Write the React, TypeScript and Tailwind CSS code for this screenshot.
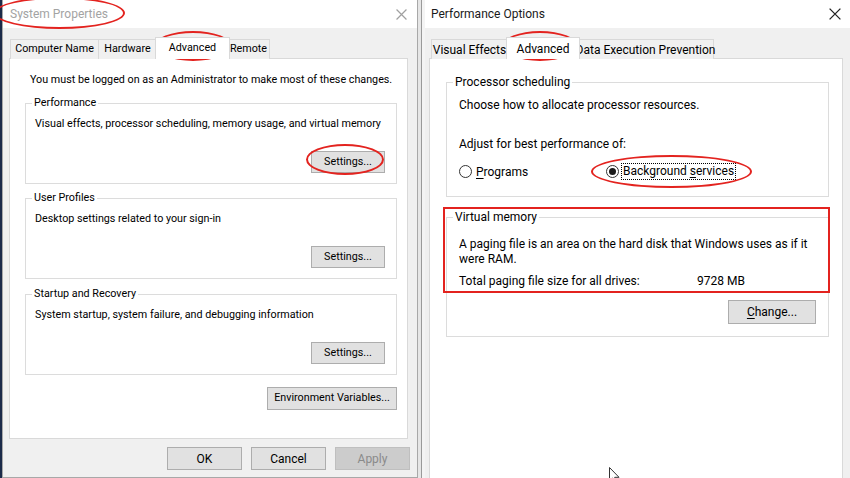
import React from "react";

function CloseX({ color, size }: { color: string; size: number }) {
  return (
    <svg width={size} height={size} viewBox="0 0 10 10" fill="none">
      <path d="M0.5 0.5 L9.5 9.5 M9.5 0.5 L0.5 9.5" stroke={color} strokeWidth="1.1" />
    </svg>
  );
}

function Btn({ children, className }: { children: React.ReactNode; className: string }) {
  return (
    <div className={`flex items-center justify-center whitespace-nowrap border border-[#adadad] bg-[#e1e1e1] text-black ${className}`}>
      {children}
    </div>
  );
}

function Radio({ checked }: { checked?: boolean }) {
  return (
    <span className="flex h-[13px] w-[13px] items-center justify-center rounded-full border border-[#333333] bg-white">
      {checked ? <span className="h-[7px] w-[7px] rounded-full bg-[#1a1a1a]" /> : null}
    </span>
  );
}

function Ellipse({ className }: { className: string }) {
  return <div className={`pointer-events-none absolute rounded-[50%] border-2 border-[#e3231f] ${className}`} />;
}

function LeftGroup({ title, desc, mt }: { title: string; desc: string; mt: string }) {
  return (
    <fieldset className={`ml-[15px] mr-[10px] min-w-0 border border-[#dcdcdc] ${mt}`}>
      <legend className="ml-[6px] px-[2px] leading-[14px]">{title}</legend>
      <div className="pb-[10px] pl-[9px] pr-[11px] pt-[6px]">
        <div className="leading-[16px]">{desc}</div>
        <div className="mt-[19px] flex justify-end">
          <Btn className="h-[22px] w-[74px]">Settings...</Btn>
        </div>
      </div>
    </fieldset>
  );
}

export default function App() {
  return (
    <div className="relative flex h-[478px] w-[850px] overflow-hidden whitespace-nowrap bg-[#f0f0f0] font-['Roboto',sans-serif] text-black">
      {/* desktop edge */}
      <div className="w-[2px] shrink-0 bg-[#1c2b4a]" />

      {/* LEFT: System Properties */}
      <div className="flex w-[416px] shrink-0 flex-col border-b border-l border-r border-[#a8a8a8]">
        <div className="flex h-[28px] items-center justify-between bg-white pl-[7px] pr-[10px]">
          <span className="text-[12px] text-[#a3a3a3]">System Properties</span>
          <CloseX color="#a0a0a0" size={11} />
        </div>
        <div className="flex flex-1 flex-col bg-[#f0f0f0] pl-[6px] pr-[9px] pt-[10px] text-[10.75px]">
          {/* tabs */}
          <div className="relative z-10 -mb-px flex h-[21px] items-end pl-[1px]">
            <div className="flex h-[20px] w-[89px] items-center justify-center border border-b-0 border-[#d9d9d9] bg-[#f0f0f0]">Computer Name</div>
            <div className="-ml-px flex h-[20px] w-[59px] items-center justify-center border border-b-0 border-[#d9d9d9] bg-[#f0f0f0]">Hardware</div>
            <div className="relative z-10 -mx-[2px] flex h-[22px] w-[75px] items-center justify-center border border-b-0 border-[#d9d9d9] bg-white">Advanced</div>
            <div className="flex h-[20px] w-[42px] items-center justify-center border border-b-0 border-l-0 border-[#d9d9d9] bg-[#f0f0f0]">Remote</div>
          </div>
          {/* panel */}
          <div className="flex h-[381px] flex-col border border-[#d9d9d9] bg-white">
            <div className="ml-[20px] mt-[13px] leading-[16px]">You must be logged on as an Administrator to make most of these changes.</div>

            <LeftGroup
              title="Performance"
              desc="Visual effects, processor scheduling, memory usage, and virtual memory"
              mt="mt-[8px]"
            />
            <LeftGroup title="User Profiles" desc="Desktop settings related to your sign-in" mt="mt-[7px]" />
            <LeftGroup
              title="Startup and Recovery"
              desc="System startup, system failure, and debugging information"
              mt="mt-[8px]"
            />

            <div className="mr-[10px] mt-[12px] flex justify-end">
              <Btn className="h-[23px] w-[130px]">Environment Variables...</Btn>
            </div>
          </div>
          {/* dialog buttons */}
          <div className="-mr-[2px] mt-[8px] flex justify-end gap-[9px] text-[12px]">
            <Btn className="h-[23px] w-[75px]">OK</Btn>
            <Btn className="h-[23px] w-[75px]">Cancel</Btn>
            <div className="flex h-[23px] w-[75px] items-center justify-center border border-[#bfbfbf] bg-[#cccccc] text-[#8a8a8a]">Apply</div>
          </div>
        </div>
      </div>

      {/* seam between windows */}
      <div className="flex w-[7px] shrink-0">
        <div className="w-[3px] bg-[#e6e6e6]" />
        <div className="w-[1px] bg-[#9a9a9a]" />
        <div className="w-[3px] bg-[#f4f4f4]" />
      </div>

      {/* RIGHT: Performance Options */}
      <div className="flex min-w-0 flex-1 flex-col">
        <div className="flex h-[28px] items-center justify-between bg-white pl-[6px] pr-[9px]">
          <span className="text-[12px] text-[#1a1a1a]">Performance Options</span>
          <CloseX color="#222222" size={12} />
        </div>
        <div className="flex flex-1 flex-col bg-[#f0f0f0] pl-[4px] pt-[10px] text-[12px]">
          <div className="relative z-10 -mb-px flex h-[21px] items-end pl-[2px]">
            <div className="flex h-[20px] w-[77px] items-center justify-center border border-b-0 border-[#d9d9d9] bg-[#f0f0f0]">Visual Effects</div>
            <div className="relative z-10 -mx-[2px] flex h-[22px] w-[74px] items-center justify-center border border-b-0 border-[#d9d9d9] bg-white">Advanced</div>
            <div className="flex h-[20px] w-[136px] items-center justify-center border border-b-0 border-l-0 border-[#d9d9d9] bg-[#f0f0f0]">Data Execution Prevention</div>
          </div>
          <div className="flex w-[414px] flex-1 flex-col border border-b-0 border-[#d9d9d9] bg-white">
            <fieldset className="ml-[16px] mt-[15px] w-[383px] min-w-0 border border-[#dcdcdc]">
              <legend className="ml-[6px] px-[2px] leading-[16px]">Processor scheduling</legend>
              <div className="pb-[16px] pl-[12px] pt-[7px]">
                <div className="leading-[16px]">Choose how to allocate processor resources.</div>
                <div className="mt-[23px] leading-[16px]">Adjust for best performance of:</div>
                <div className="mt-[11px] flex h-[17px] items-center">
                  <Radio />
                  <span className="ml-[4px] w-[130px]"><span className="underline underline-offset-2">P</span>rograms</span>
                  <Radio checked />
                  <span className="ml-[2px] border border-dotted border-black px-[1px] leading-[15px]">
                    Background <span className="underline underline-offset-2">s</span>ervices
                  </span>
                </div>
              </div>
            </fieldset>

            <fieldset className="ml-[16px] mt-[12px] w-[383px] min-w-0 border border-[#dcdcdc]">
              <legend className="ml-[6px] px-[2px] leading-[16px]">Virtual memory</legend>
              <div className="pb-[12px] pl-[12px] pr-[12px] pt-[12px]">
                <div className="whitespace-normal leading-[15px]">A paging file is an area on the hard disk that Windows uses as if it were RAM.</div>
                <div className="mt-[6px] flex leading-[16px]">
                  <span className="w-[238px]">Total paging file size for all drives:</span>
                  <span>9728 MB</span>
                </div>
                <div className="mt-[11px] flex justify-end">
                  <Btn className="h-[24px] w-[88px]"><span><span className="underline underline-offset-2">C</span>hange...</span></Btn>
                </div>
              </div>
            </fieldset>
          </div>
        </div>
      </div>

      {/* annotations */}
      <Ellipse className="left-[-6px] top-[-3px] h-[32px] w-[131px]" />
      <Ellipse className="left-[154px] top-[31px] h-[30px] w-[78px]" />
      <Ellipse className="left-[306px] top-[144px] h-[31px] w-[78px]" />
      <Ellipse className="left-[502px] top-[31px] h-[30px] w-[76px]" />
      <Ellipse className="left-[591px] top-[155px] h-[33px] w-[161px]" />
      <div className="pointer-events-none absolute left-[443px] top-[207px] h-[86px] w-[387px] border-2 border-[#e3231f]" />

      {/* mouse cursor */}
      <svg className="pointer-events-none absolute left-[609px] top-[467px]" width="12" height="18" viewBox="0 0 12 18">
        <path d="M0.5 0.5 L0.5 14 L3.6 11 L6 16.5 L8 15.6 L5.7 10.3 L10 10.3 Z" fill="white" stroke="#333" strokeWidth="1" />
      </svg>
    </div>
  );
}
